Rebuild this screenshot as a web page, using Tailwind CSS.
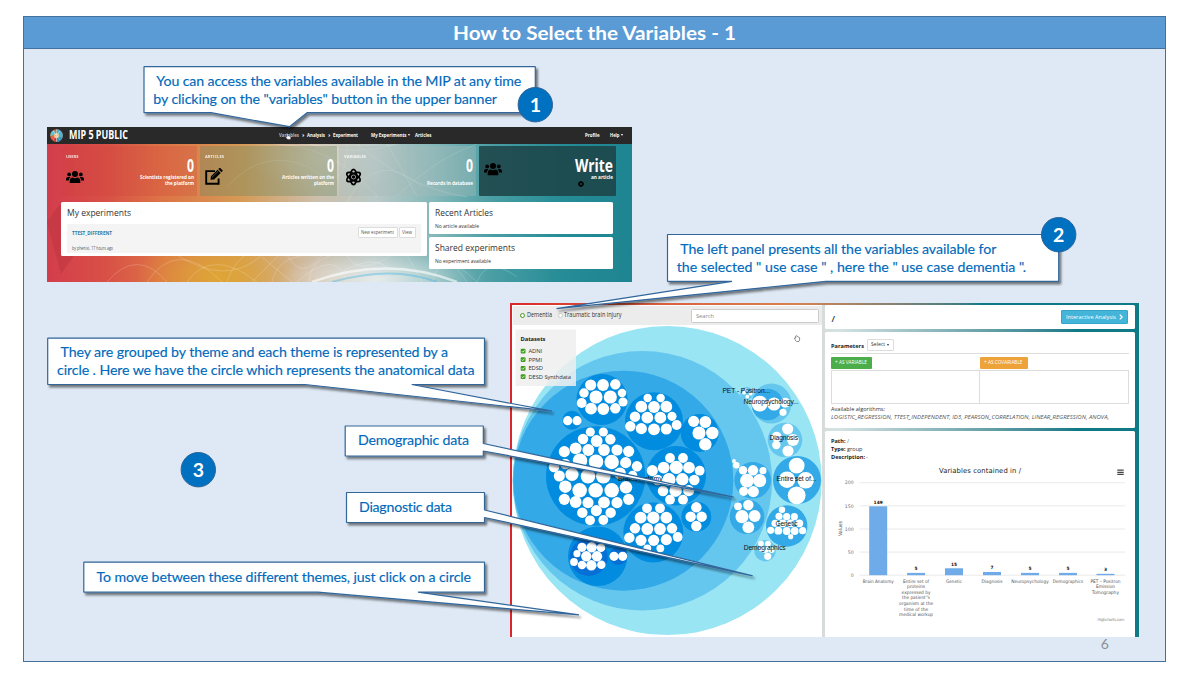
<!DOCTYPE html>
<html lang="en">
<head>
<meta charset="utf-8">
<title>How to Select the Variables - 1</title>
<script src="https://cdn.jsdelivr.net/npm/@tailwindcss/browser@4"></script>
</head>
<body class="bg-white">
<main class="relative w-[1200px] h-[675px] overflow-hidden bg-white font-['Open_Sans','Noto_Sans',sans-serif]">

  <!-- slide frame -->
  <section class="absolute left-[23px] top-[16px] w-[1143px] h-[646px] border border-[#41719c] bg-[#dee9f5] flex flex-col">
    <h1 class="h-[32px] shrink-0 bg-[#5b9bd5] border-b border-[#41719c] flex items-center justify-center text-white font-bold text-[19.5px] leading-none font-['Lato',sans-serif]"><span data-w="283">How to Select the Variables - 1</span></h1>
  </section>

  <!-- home page window -->
  <section class="absolute left-[47px] top-[127px] w-[585px] h-[155px] flex flex-col overflow-hidden">
    <svg class="absolute inset-0" width="585" height="155" viewBox="0 0 585 155">
      <defs>
        <linearGradient id="sky" x1="0" y1="0" x2="1" y2="0">
          <stop offset="0" stop-color="#d33d4c"/><stop offset=".1" stop-color="#d85046"/><stop offset=".2" stop-color="#dd7546"/><stop offset=".33" stop-color="#d69a55"/>
          <stop offset=".46" stop-color="#cdbfab"/><stop offset=".56" stop-color="#b9c9c7"/><stop offset=".66" stop-color="#86b8ba"/><stop offset=".76" stop-color="#4a9ea4"/><stop offset=".88" stop-color="#268c96"/><stop offset="1" stop-color="#1d8491"/>
        </linearGradient>
        <radialGradient id="glow"><stop offset="0" stop-color="#fff" stop-opacity=".65"/><stop offset="1" stop-color="#fff" stop-opacity="0"/></radialGradient>
        <radialGradient id="amber"><stop offset="0" stop-color="#dfa832" stop-opacity=".9"/><stop offset="1" stop-color="#dfa832" stop-opacity="0"/></radialGradient>
      </defs>
      <rect width="585" height="155" fill="url(#sky)"/>
      <ellipse cx="170" cy="150" rx="80" ry="45" fill="url(#amber)"/>
      <ellipse cx="330" cy="152" rx="100" ry="26" fill="url(#glow)"/>
      <ellipse cx="280" cy="30" rx="80" ry="40" fill="url(#glow)" opacity=".4"/>
      <path d="M0 95L14 147 26 130 14 75z" fill="#b8343f" opacity=".45"/>
      <g fill="none" stroke="#fff" stroke-opacity=".26" stroke-width=".7">
        <path d="M60 155Q90 120 120 155M100 155Q130 110 175 155M130 128Q180 160 215 128M140 155Q165 120 210 155M180 155Q195 110 240 128M205 155L232 128M215 130L245 155M225 155Q230 130 262 128M240 128Q255 155 275 128M250 155Q290 120 300 155M262 155Q262 135 285 128M280 155Q320 125 340 140M300 128Q310 150 345 128M360 128L375 155M385 155Q395 120 430 155M400 128L420 155M430 155Q440 128 470 150M180 60Q215 20 262 40Q300 70 300 17M230 17Q290 20 330 70M262 17Q310 30 350 17M300 75Q330 20 375 60M310 17Q360 60 420 70M340 17L370 69M350 69Q390 30 430 17"/>
        <path d="M265 155Q340 128 410 155" stroke-width="2.5" stroke-opacity=".6"/>
        <path d="M285 155Q345 138 390 155" stroke-width="2" stroke="#3fb5e5" stroke-opacity=".4"/>
      </g>
    </svg>
    <header class="relative h-[16.5px] shrink-0 bg-[#292929] flex items-center text-white font-bold text-[5.8px] leading-none">
      <svg class="ml-[2.5px] mr-[6.5px]" width="13" height="13" viewBox="0 0 13 13">
        <circle cx="6.5" cy="6.5" r="6.3" fill="#e9663f"/>
        <path d="M6.5 .2A6.3 6.3 0 0 1 6.5 12.8z" fill="#4fb3cf"/>
        <path d="M.4 7A6 6 0 0 1 4 1.1L6 5.5z" fill="#5ec3d8"/><path d="M7 7L12 9.3A6.3 6.3 0 0 1 7 12.7z" fill="#2f8fb9"/><path d="M2 10.5L6 7V12.7z" fill="#d8343e"/>
        <circle cx="6.5" cy="6.5" r="2.6" fill="#f5c98c" opacity=".85"/><path d="M6.5 .5V12.5M3 2L6 6M10 2L7 6M3 11L6 7M10 11L7 7" stroke="#fff" stroke-width=".5" opacity=".7"/>
      </svg>
      <span data-w="59" class="text-[12px]">MIP 5 PUBLIC</span>
      <nav class="ml-[151px] flex items-center">
        <span data-w="20" class="text-[#bbb]">Variables</span><span class="ml-[3px]" data-w="2.5">›</span>
        <span class="ml-[2.5px]" data-w="18">Analysis</span><span class="ml-[3px]" data-w="2.5">›</span>
        <span class="ml-[2.5px]" data-w="25">Experiment</span>
        <span class="ml-[13px]" data-w="35.5">My Experiments</span>
        <i class="ml-[1.5px] mr-[4.5px] border-x-[1.5px] border-x-transparent border-t-[2px] border-t-white"></i>
        <span data-w="16.5">Articles</span>
      </nav>
      <span class="ml-auto" data-w="14.5">Profile</span>
      <span class="ml-[10px]" data-w="9.5">Help</span>
      <i class="ml-[1.5px] mr-[9.5px] border-x-[1.5px] border-x-transparent border-t-[2px] border-t-white"></i>
    </header>

    <div class="relative mt-[2px] ml-[13.7px] mr-[16.5px] h-[50.5px] shrink-0 grid grid-cols-4 gap-[2.8px] text-white font-bold text-[4.8px] leading-[4.6px]">
      <div class="relative rounded-[1px] bg-[#d0403c]/25 px-[5px] flex flex-col">
        <span data-w="12.5" class="mt-[8px] text-[4px] opacity-80">USERS</span>
        <div class="absolute right-[3px] top-[10px] flex flex-col items-end">
          <span data-w="7" class="text-[17px] leading-[19px]">0</span><span data-w="54">Scientists registered on</span><span class="mt-[1.8px]" data-w="29">the platform</span>
        </div>
        <svg class="mt-[12.5px]" width="18" height="12.5" viewBox="0 0 18 12.5"><g fill="#000"><circle cx="9" cy="3" r="3"/><circle cx="3.2" cy="3.4" r="1.9"/><circle cx="14.8" cy="3.4" r="1.9"/><path d="M3.7 12.3V10Q3.9 7 6.7 6.6Q9 8 11.3 6.6Q14.1 7 14.3 10V12.3zM0 9.6V8Q.2 6 2 6H4.4Q3.1 7.3 2.9 9.6zM18 9.6V8Q17.8 6 16 6H13.6Q14.9 7.3 15.1 9.6z"/></g></svg>
      </div>
      <div class="relative rounded-[1px] bg-[#6f8a62]/38 px-[5px] flex flex-col">
        <span data-w="19" class="mt-[8px] text-[4px] opacity-80">ARTICLES</span>
        <div class="absolute right-[3px] top-[10px] flex flex-col items-end">
          <span data-w="7" class="text-[17px] leading-[19px]">0</span><span data-w="52">Articles written on the</span><span class="mt-[1.8px]" data-w="20">platform</span>
        </div>
        <svg class="mt-[10px]" width="18" height="17" viewBox="0 0 18 17"><path d="M10 3.1H1.2V15.7H13.6V10.5" fill="none" stroke="#000" stroke-width="1.9"/><path d="M5.5 11.8L6 8.3 12.6 1.8 15.7 4.9 9.1 11.4zM13.3 1.1L14.5 0Q15 -.2 15.5 .2L17.5 2.2Q17.8 2.7 17.5 3.1L16.4 4.2z"/><path d="M7 9.3L13 3.4" stroke="#9a9a77" stroke-width=".5"/></svg>
      </div>
      <div class="relative rounded-[1px] bg-[#a9bab9]/38 px-[5px] flex flex-col">
        <span data-w="22" class="mt-[8px] text-[4px] opacity-80">VARIABLES</span>
        <div class="absolute right-[3px] top-[10px] flex flex-col items-end">
          <span data-w="7" class="text-[17px] leading-[19px]">0</span><span class="mt-[6.4px]" data-w="46">Records in database</span>
        </div>
        <svg class="mt-[9.5px] ml-[.5px]" width="17" height="18" viewBox="0 0 17 18"><g fill="none" stroke="#000" stroke-width="1.8"><ellipse cx="8.5" cy="9" rx="3.2" ry="7.6"/><ellipse cx="8.5" cy="9" rx="3.2" ry="7.6" transform="rotate(60 8.5 9)"/><ellipse cx="8.5" cy="9" rx="3.2" ry="7.6" transform="rotate(120 8.5 9)"/></g><circle cx="8.5" cy="9" r="1.7"/></svg>
      </div>
      <div class="relative rounded-[1px] bg-[#1d4448]/88 px-[5px]">
        <svg class="mt-[17.5px]" width="18" height="12.5" viewBox="0 0 18 12.5"><g fill="#000"><circle cx="9" cy="3" r="3"/><circle cx="3.2" cy="3.4" r="1.9"/><circle cx="14.8" cy="3.4" r="1.9"/><path d="M3.7 12.3V10Q3.9 7 6.7 6.6Q9 8 11.3 6.6Q14.1 7 14.3 10V12.3zM0 9.6V8Q.2 6 2 6H4.4Q3.1 7.3 2.9 9.6zM18 9.6V8Q17.8 6 16 6H13.6Q14.9 7.3 15.1 9.6z"/></g></svg>
        <div class="absolute right-[3px] top-[10px] flex flex-col items-end">
          <span data-w="38" class="text-[17px] leading-[19px]">Write</span><span data-w="22">an article</span>
        </div>
        <svg class="absolute left-[99px] top-[35.5px]" width="6" height="6" viewBox="0 0 6 6"><circle cx="3" cy="3" r="1.9" fill="none" stroke="#000" stroke-width="1.5"/><path d="M3 0V6M0 3H6" stroke="#000" stroke-width=".8"/><circle cx="3" cy="3" r="1" fill="#1d4448"/></svg>
      </div>
    </div>

    <div class="relative mt-[6px] ml-[13.7px] flex items-start gap-[2.7px] text-[#333]">
      <div class="w-[366px] h-[54px] rounded-[1.5px] bg-white px-[6px] pt-[6px]">
        <h2 data-w="64" class="text-[8.4px] leading-[10px]">My experiments</h2>
        <div class="mt-[5.5px] h-[29px] bg-[#f4f4f4] px-[5px] flex justify-between">
          <div class="flex flex-col text-[4.6px] leading-[6px]">
            <span data-w="40" class="mt-[6px] font-bold text-[#2b7ba3] text-[5px]">TTEST_DIFFERENT</span>
            <span data-w="41" class="mt-[9px] text-[#555]">by phenixi, 17 hours ago</span>
          </div>
          <div class="mt-[3.5px] flex gap-[1px] text-[4.8px] leading-none text-[#555]">
            <span class="h-[11px] w-[40px] border border-[#ddd] bg-white rounded-[1px] flex items-center justify-center"><span data-w="33">New experiment</span></span>
            <span class="h-[11px] w-[17px] border border-[#ddd] bg-white rounded-[1px] flex items-center justify-center"><span data-w="10">View</span></span>
          </div>
        </div>
      </div>
      <div class="w-[183.5px] flex flex-col gap-[3px]">
        <div class="h-[32px] rounded-[1.5px] bg-white px-[6px] pt-[6px]"><h2 data-w="58" class="text-[8.4px] leading-[10px]">Recent Articles</h2><p data-w="44" class="mt-[5px] text-[5px] leading-[6px]">No article available</p></div>
        <div class="h-[32px] rounded-[1.5px] bg-white px-[6px] pt-[6px]"><h2 data-w="80" class="text-[8.4px] leading-[10px]">Shared experiments</h2><p data-w="56" class="mt-[5px] text-[5px] leading-[6px]">No experiment available</p></div>
      </div>
    </div>
  </section>

  <!-- variable explorer window -->
  <section class="absolute left-[509.5px] top-[303px] w-[629px] h-[334px] overflow-hidden flex gap-[3px] pt-[2px] pl-[2px] bg-linear-to-r from-[#d9252b] from-0% via-[#d5e3e3] via-52% to-[#0f7986] to-90%">
    <div class="absolute left-0 top-0 w-full h-[2px] bg-linear-to-r from-[#d9252b] via-[#d8824c] via-45% to-[#0f7986] to-75%"></div>
    <div class="w-[310px] shrink-0 h-full bg-white flex flex-col">
      <div class="h-[19px] shrink-0 mt-[1px] ml-px bg-[#ececec] flex items-center text-[6.2px] leading-none text-[#333]">
        <i class="ml-[7px] w-[5.6px] h-[5.6px] rounded-full border-[1.9px] border-[#3f9c1c] bg-white"></i>
        <span class="ml-[1.5px]" data-w="25">Dementia</span>
        <i class="ml-[6px] w-[5.4px] h-[5.4px] rounded-full border-[.5px] border-[#ccc] bg-white"></i>
        <span class="ml-[1px]" data-w="57.5">Traumatic brain injury</span>
        <span class="ml-auto mr-[3px] w-[128px] h-[14px] border border-[#ccc] rounded-[1.5px] bg-white flex items-center pl-[4px] text-[5.8px] text-[#888]"><span data-w="18">Search</span></span>
      </div>
    </div>
    <div class="w-[310px] shrink-0 flex flex-col text-[#333] text-[5.6px] leading-none">
      <div class="h-[23.5px] shrink-0 bg-white rounded-[1.5px] flex items-center pl-[7px] pr-[6.5px]">
        <span class="text-[9px] mt-[4px] font-semibold">/</span>
        <span class="ml-auto w-[67.5px] h-[13.5px] rounded-[1px] bg-[#45b4d9] border border-[#36a5cb] text-white flex items-center justify-center gap-[3px] text-[6px]"><span data-w="50">Interactive Analysis</span><svg width="4" height="6" viewBox="0 0 4 6"><path d="M.8.6L3.2 3 .8 5.4" fill="none" stroke="#fff" stroke-width="1.3"/></svg></span>
      </div>
      <div class="mt-[3px] h-[96px] shrink-0 bg-white rounded-[1.5px] px-[6px] flex flex-col">
        <div class="mt-[7px] h-[15px] shrink-0 border-b border-[#ddd] flex items-start">
          <span data-w="33" class="mt-[4px] ml-[.5px] text-[6px] font-bold text-[#222]">Parameters</span>
          <span class="ml-[2.5px] w-[27px] h-[12px] border border-[#ddd] rounded-[1px] flex items-center justify-center gap-[1.5px] text-[5px]"><span data-w="14">Select</span><i class="border-x-[1.5px] border-x-transparent border-t-[2px] border-t-[#333]"></i></span>
        </div>
        <div class="mt-[3px] grid grid-cols-2 text-white text-[5px]">
          <span class="w-[41.5px] h-[12px] bg-[#4bae4b] rounded-[1px] flex items-center justify-center"><span data-w="32">+ AS VARIABLE</span></span>
          <span class="w-[48px] h-[12px] bg-[#eda23a] rounded-[1px] flex items-center justify-center"><span data-w="38.5">+ AS COVARIABLE</span></span>
        </div>
        <div class="mt-[1.5px] h-[33.5px] shrink-0 grid grid-cols-2 border border-[#ddd]"><i class="border-r border-[#ddd]"></i></div>
        <span data-w="54" class="mt-[2px] leading-[6px]">Available algorithms:</span>
        <span data-w="278" class="mt-[2px] leading-[6px] italic text-[#555]">LOGISTIC_REGRESSION, TTEST_INDEPENDENT, ID3, PEARSON_CORRELATION, LINEAR_REGRESSION, ANOVA,</span>
      </div>
      <div class="mt-[3px] h-[206.5px] shrink-0 bg-white rounded-t-[1.5px] px-[6px] pt-[7px] flex flex-col gap-[2px] leading-[6px] text-[5.8px]">
        <div class="flex gap-[1.5px]"><b data-w="14.5" class="text-[#222]">Path:</b><span data-w="2" class="text-[#2b7ba3]">/</span></div>
        <div class="flex gap-[1.5px]"><b data-w="14.500" class="text-[#222]">Type:</b><span data-w="15.500">group</span></div>
        <div class="flex gap-[1.500px]"><b data-w="34" class="text-[#222]">Description:</b><span data-w="1.800">-</span></div>
      </div>
    </div>
  </section>

  <!-- diagram, chart and callouts share the slide's coordinates -->
  <svg class="absolute inset-0 [font-variant-ligatures:none]" width="1200" height="675" viewBox="0 0 1200 675">
    <defs>
      <filter id="shadow" x="-5%" y="-20%" width="115%" height="160%"><feDropShadow dx="2" dy="2.500" stdDeviation="1.300" flood-color="#000" flood-opacity=".5"/></filter>
    </defs>
    <g id="bubbles"></g>
    <rect x="515.500" y="329.500" width="60.500" height="56.500" fill="#efefef" fill-opacity=".85"/>
    <g font-family="'Open Sans',sans-serif" fill="#333" font-size="5.800">
      <text x="520.500" y="341" font-weight="700" fill="#222" textLength="25">Datasets</text>
      <text x="528.500" y="353" textLength="13.500">ADNI</text>
      <text x="528.500" y="361.500" textLength="13.500">PPMI</text>
      <text x="528.500" y="370.300" textLength="14.500">EDSD</text>
      <text x="528.500" y="378.700" textLength="42.500">DESD Synthdata</text>
    </g>
    <g fill="#3f9c1c"><rect x="520.700" y="348.800" width="4.800" height="4.800" rx="1"/><rect x="520.700" y="357.200" width="4.800" height="4.800" rx="1"/><rect x="520.700" y="365.900" width="4.800" height="4.800" rx="1"/><rect x="520.700" y="374.300" width="4.800" height="4.800" rx="1"/></g>
    <path d="M521.800 351.200l1 1 1.700-2M521.800 359.600l1 1 1.700-2M521.800 368.300l1 1 1.700-2M521.800 376.700l1 1 1.700-2" fill="none" stroke="#fff" stroke-width=".8"/>
    <g font-family="'Liberation Sans',Arial,sans-serif" font-size="6.700" fill="#111">
      <text x="722.500" y="393.300" textLength="47.500">PET - Positron...</text>
      <text x="743.500" y="403.800" textLength="55">Neuropsychology...</text>
      <text x="769.500" y="440.300" textLength="28.500">Diagnosis</text>
      <text x="776.500" y="480.900" textLength="39.500">Entire set of...</text>
      <text x="775.500" y="525.900" textLength="22">Genetic</text>
      <text x="743.700" y="550.300" textLength="42">Demographics</text>
      <text x="618" y="481" textLength="44.500">Brain Anatomy</text>
    </g>
    <path d="M795.500 340.500l-1-2.500q.6-.8 1.300 0l-.2-2q.7-.7 1.300 0l1.500 1 1.200.7v2.300l-.8 1.500h-2.200z" fill="#fff" stroke="#444" stroke-width=".6"/>

    <!-- chart -->
    <g stroke="#e3e3e3" stroke-width=".8"><path d="M859.500 482.700H1125M859.500 505.800H1125M859.500 529H1125M859.500 552.100H1125M859.500 575.200H1125"/></g>
    <g id="chart" font-family="'DejaVu Sans',sans-serif" font-size="4.700" fill="#555"></g>
    <text x="939" y="473" textLength="82" font-family="'DejaVu Sans',sans-serif" font-size="6.800" fill="#222">Variables contained in /</text>
    <text transform="translate(841.500 536) rotate(-90)" textLength="15" font-family="'DejaVu Sans',sans-serif" font-size="5" fill="#555">Values</text>
    <text x="1097.500" y="621" textLength="27" font-family="'DejaVu Sans',sans-serif" font-size="4" fill="#888">Highcharts.com</text>
    <path d="M1117.300 470.200h6.400M1117.300 472.300h6.400M1117.300 474.400h6.400" stroke="#444" stroke-width="1.200"/>

    <!-- callouts -->
    <g fill="#fff" stroke="#31669b" stroke-width="1.200" stroke-linejoin="bevel">
      <path filter="url(#shadow)" d="M144 66.700H535.300V112.700H307L289.500 126.700 211 112.700H144z"/>
      <path filter="url(#shadow)" d="M667.500 234.500H1058.700V281.300H826L556.500 308.700 732 281.300H667.500z"/>
      <path filter="url(#shadow)" d="M47.700 338.200H484.500V384.500H411.700L552 411.200 305 384.500H47.700z"/>
      <path filter="url(#shadow)" d="M345.200 426H483.300V443.500L733.700 497.200 483.300 451V456H345.200z"/>
      <path filter="url(#shadow)" d="M346.500 492.500H484.500V510L752.700 575.800 484.500 517.500V522.500H346.500z"/>
      <path filter="url(#shadow)" d="M83.800 562.200H484.500V592.200H418L579 614.800 318 592.200H83.800z"/>
    </g>
    <g font-family="'Lato',sans-serif" font-size="14.200" fill="#0069bb" stroke="#0069bb" stroke-width=".15">
      <text x="156.300" y="85.500" textLength="365">You can access the variables available in the MIP at any time</text>
      <text x="153.300" y="103.500" textLength="343.700">by clicking on the "variables" button in the upper banner</text>
      <text x="680.300" y="254" textLength="316">The left panel presents all the variables available for</text>
      <text x="676.700" y="272" textLength="349.500">the selected " use case " , here the " use case dementia ".</text>
      <text x="60.500" y="357" textLength="387.500">They are grouped by theme and each theme is represented by a</text>
      <text x="57" y="375" textLength="417.500">circle . Here we have the circle which represents the anatomical data</text>
      <text x="358" y="445" textLength="111">Demographic data</text>
      <text x="359" y="511.700" textLength="93">Diagnostic data</text>
      <text x="96.500" y="581.500" textLength="374.500">To move between these different themes, just click on a circle</text>
    </g>
    <g fill="#0070c0" stroke="#2c6399" stroke-width="1"><circle cx="535.300" cy="104.700" r="17.200"/><circle cx="1058.700" cy="234.700" r="17.200"/><circle cx="198.300" cy="469.700" r="17.200"/></g>
    <g font-family="'Lato',sans-serif" font-weight="700" font-size="19.500" fill="#fff" text-anchor="middle"><text x="535.300" y="111.600">1</text><text x="1058.700" y="241.600">2</text><text x="198.300" y="476.800">3</text></g>
    <text x="1104.700" y="649" text-anchor="middle" font-family="'Lato',sans-serif" font-size="14" fill="#8b8f94">6</text>
    <path d="M287.300 139.300l-1.600-2.300q.2-1 1.100-.2l.3.300v-3q.6-.9 1.100 0v1.800l2 .5q.7.400.5 1.500l-.5 1.500z" fill="#fff" stroke="#333" stroke-width=".3"/>
  </svg>
</main>

<script>
  const NS = 'http://www.w3.org/2000/svg';
  const add = (parent, tag, attrs, text) => {
    const e = document.createElementNS(NS, tag);
    for (const k in attrs) e.setAttribute(k, attrs[k]);
    if (text !== undefined) e.textContent = text;
    parent.appendChild(e);
    return e;
  };

  // Group discs: cx, cy, r, fill
  const discs = [
    [667.2,480.6,154.5,'#99e5f4'],[642.4,480.7,129.7,'#66c7ee'],[623.3,480.7,110,'#34a9e7'],
    [602,399.5,25.5,'#018cdf'],[654,421.3,29,'#018cdf'],[699.7,433,19,'#018cdf'],[572,420.3,9.5,'#018cdf'],
    [595.7,476,49.7,'#018cdf'],[676.2,475.7,29.8,'#018cdf'],[653.3,532.5,30,'#018cdf'],[696.3,516.7,15,'#018cdf'],
    [597.7,556.2,29.7,'#018cdf'],[588.7,557,19,'#0670d6'],[618.3,556,9,'#0670d6'],
    [746.7,393.5,6.5,'#66c7ee'],[771.5,403.6,20,'#66c7ee'],[767.5,404.5,15.8,'#34a9e7'],[785,440,17.3,'#66c7ee'],
    [797,480,24,'#34a9e7'],[752.7,480.3,18.3,'#34a9e7'],[747,516.7,17.3,'#34a9e7'],[786.7,526,20.7,'#34a9e7'],[765,550.7,10.7,'#66c7ee']
  ];
  // Leaf discs in thirds of a pixel from each origin: x, y, r
  const leaves = [
    [500,300,[272,255,17,309,255,18,346,253,16,252,279,14.5,288,291,20,331,291,20,366,279,13,245,309,15,369,306,14,273,326,18,310,327,18,346,325,16,
      203,362,14,231,362,14,
      443,294,13,482,294,13,424,320,18,462,321,18,499,320,18,405,350,16,442,353,18,481,353,18,516,349,14,391,379,16,424,386,17,462,388,18,499,387,17,530,375,15]],
    [660,300,[101,364,17,136,366,18,117,399,20,157,399,19,136,433,19,
      299,311,24,342,312,20,376,308,15,369,337,11,252,278,6,262,290,6,272,281,6,258,270,5,
      383,387,17,350,410,15,399,420,18,349,435,13,384,453,17]],
    [540,400,[151,96,14,190,96,14,129,117,16,170,123,18,211,118,16,73,155,17,107,145,18,145,150,18,192,150,18,231,150,17,266,154,17,120,182,22,168,185,22,215,186,22,257,188,17,291,199,16,
      76,192,16,42,201,16,58,228,17,96,223,20,144,229,22,190,229,22,240,220,18,278,226,14,76,260,19,119,271,22,167,271,22,215,271,22,258,262,19,73,298,17,107,306,18,144,308,17,192,307,18,231,308,17,266,298,17,
      127,338,16,169,332,17,212,338,16,150,361,15,190,360,15,
      390,174,15,429,174,15,371,203,18,409,202,20,447,203,18,337,212,17,479,212,15,387,239,20,427,238,19,463,240,16,353,240,16,369,273,16,407,272,19,446,272,17,390,299,15,429,299,15]],
    [500,460,[441,145,15,480,145,15,422,173,18,460,173,19,499,173,18,405,205,16,442,207,18,480,207,18,516,205,16,388,233,16,423,241,17,461,241,17,499,239,17,533,231,15,442,265,12,481,265,12,
      246,262,14,275,262,16,303,263,13,231,281,11,259,289,16,291,289,16,222,306,12,246,315,13,274,316,16,304,314,13,342,289,14,368,289,14]],
    [660,460,[109,142,16,92,170,16,125,170,16,109,198,16,410,17,24,381,59,25,437,61,25,410,106,27,
      249,31,13,279,31,16,309,32,11,261,62,21,299,62,20,251,94,14,280,95,17,229,16,10,222,3,6,
      234,139,12,265,135,16,246,170,20,284,168,18,265,202,18,
      366,149,10,357,169,11,380,170,11,403,170,11,345,190,11,368,190,12,392,190,12,418,190,12,332,211,11,355,212,12,380,213,12,404,213,12,428,212,11,392,230,8,
      303,251,9,324,251,9,316,268,11,335,270,9,323,289,11,302,268,6]]
  ];
  const bubbles = document.getElementById('bubbles');
  for (const [cx, cy, r, fill] of discs) add(bubbles, 'circle', {cx, cy, r, fill});
  for (const [ox, oy, v] of leaves)
    for (let i = 0; i < v.length; i += 3)
      add(bubbles, 'circle', {cx: ox + v[i] / 3, cy: oy + v[i + 1] / 3, r: v[i + 2] / 3 - 0.1, fill: '#fff'});

  // Bar chart: centre x, value, label lines with widths
  const chart = document.getElementById('chart');
  const bars = [
    [878.2,149,['Brain Anatomy',31]],
    [916.1,5,['Entire set of',26],['proteins',18],['expressed by',29],["the patient''s",28],['organism at the',34],['time of the',24],['medical workup',34]],
    [954,15,['Genetic',16]],[992,7,['Diagnosis',21]],[1030,5,['Neuropsychology',37.5]],[1068,5,['Demographics',30.5]],
    [1105.5,3,['PET – Positron',30],['Emission',19],['Tomography',27]]
  ];
  for (const [x, n, ...lines] of bars) {
    const h = Math.max(n * 0.4625, 1);
    add(chart, 'rect', {x: x - 9, y: 575.2 - h, width: 18, height: h, fill: '#6fabe8'});
    add(chart, 'text', {x, y: 572.6 - h, 'text-anchor': 'middle', 'font-weight': 700, 'font-size': 4.4, fill: '#111'}, n);
    lines.forEach(([t, w], i) => add(chart, 'text', {x: x - w / 2, y: 582.6 + i * 5.6, textLength: w, lengthAdjust: 'spacingAndGlyphs'}, t));
  }
  [200,150,100,50,0].forEach((n, i) => add(chart, 'text', {x: 853.7, y: 484.4 + i * 23.1, 'text-anchor': 'end', fill: '#777'}, n));

  // Condense or widen labels to their set width
  document.querySelectorAll('[data-w]').forEach(el => {
    const w = el.dataset.w, label = el.textContent;
    el.textContent = '';
    const svg = add(el, 'svg', {width: w});
    svg.style.cssText = 'display:block;height:1lh;overflow:visible;flex-shrink:0';
    add(svg, 'text', {x: 0, y: '50%', dy: '.36em', fill: 'currentColor', textLength: w, lengthAdjust: 'spacingAndGlyphs'}, label);
  });
</script>
</body>
</html>
